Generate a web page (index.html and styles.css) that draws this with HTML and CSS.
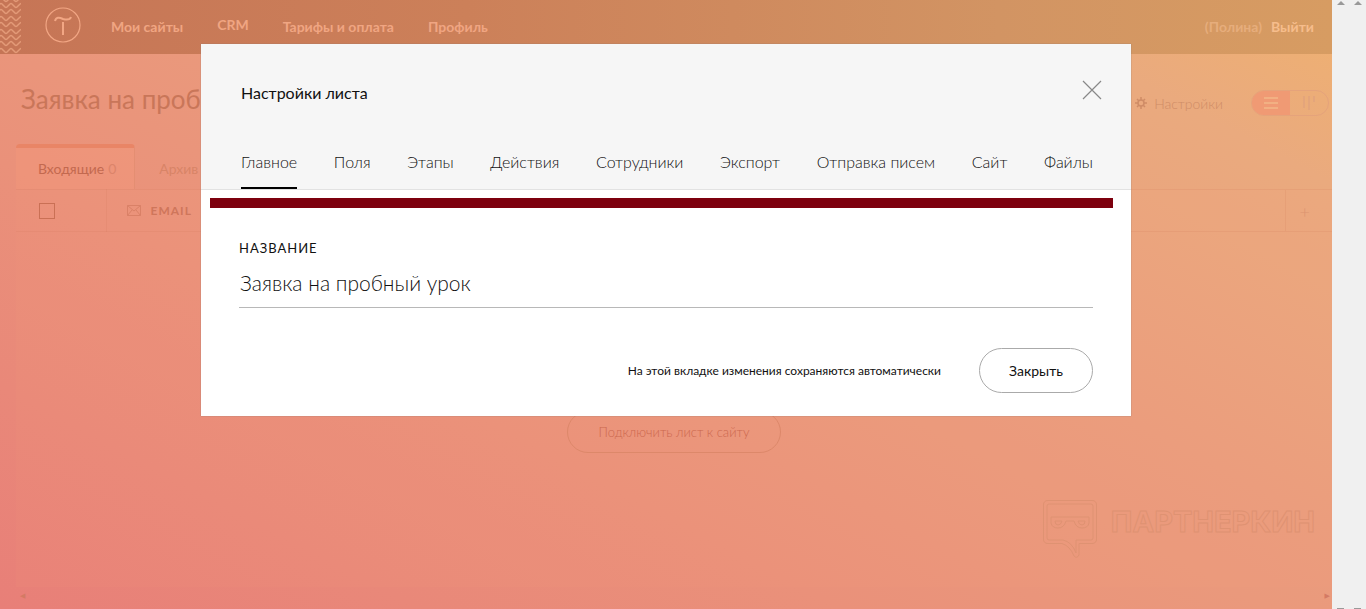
FILE: index.html
```html
<!DOCTYPE html>
<html lang="ru">
<head>
    <meta charset="UTF-8">
    <meta name="viewport" content="width=device-width, initial-scale=1.0">
    <title>Заявка на пробный урок</title>
    <link rel="stylesheet" href="styles.css">
</head>
<body>

<div class="app">
    <header class="header">
        <svg class="waves" width="21" height="54" viewBox="0 0 21 54" fill="none" stroke="#e39a78" stroke-width="1.500">
            <defs>
                <path id="wave" d="M-3 3 L0 0 Q1 -1 2 0 L5 3 Q6 4 7 3 L10 0 Q11 -1 12 0 L15 3 Q16 4 17 3 L20 0 L22 -1"/>
            </defs>
            <use href="#wave" y="-2"/>
            <use href="#wave" y="4"/>
            <use href="#wave" y="10"/>
            <use href="#wave" y="17"/>
            <use href="#wave" y="23"/>
            <use href="#wave" y="30"/>
            <use href="#wave" y="36"/>
            <use href="#wave" y="42"/>
            <use href="#wave" y="49"/>
        </svg>
        <a class="logo" href="#" aria-label="Tilda">
            <svg width="36" height="36" viewBox="0 0 36 36" fill="none" stroke="#f2a684">
                <circle cx="18" cy="18" r="17" stroke-width="1.200"/>
                <path d="M10 14 C11 10 14 10 18 12 C22 13 25 13 26 10" stroke-width="2"/>
                <path d="M18 15 V28" stroke-width="2"/>
            </svg>
        </a>
        <nav class="menu">
            <a href="#">Мои сайты</a>
            <a class="menu-crm" href="#">CRM</a>
            <a href="#">Тарифы и оплата</a>
            <a href="#">Профиль</a>
        </nav>
        <div class="user">
            <span class="user-name">(Полина)</span>
            <a href="#">Выйти</a>
        </div>
    </header>

    <div class="lead-head">
        <h1>Заявка на проб</h1>
        <div class="lead-tools">
            <button class="settings" type="button">
                <svg width="12" height="12" viewBox="0 0 12 12" fill="none" stroke="currentColor">
                    <circle cx="6" cy="6" r="3" stroke-width="1.5"/>
                    <path d="M6 0V3M6 9V12M0 6H3M9 6H12M2 2L4 4M8 8L10 10M10 2L8 4M4 8L2 10" stroke-width="1.5"/>
                </svg>
                Настройки
            </button>
            <div class="view">
                <button class="view-btn view-on" type="button" aria-label="Список">
                    <svg width="14" height="12" viewBox="0 0 14 12" stroke="#f2b083" stroke-width="2"><path d="M0 1H14M0 6H14M0 11H14"/></svg>
                </button>
                <button class="view-btn" type="button" aria-label="Доска">
                    <svg width="12" height="14" viewBox="0 0 12 14" stroke="#e4a57b" stroke-width="2"><path d="M1 0V12M6 0V14M11 0V6"/></svg>
                </button>
            </div>
        </div>
    </div>

    <div class="lead-tabs">
        <a class="lead-tab lead-tab-on" href="#">Входящие <span>0</span></a>
        <a class="lead-tab" href="#">Архив</a>
    </div>

    <main class="board">
        <table class="leads">
            <tr>
                <th class="col-check"><input type="checkbox" aria-label="Выбрать все"></th>
                <th>
                    <div class="col-email">
                        <svg width="14" height="11" viewBox="0 0 14 11" fill="none" stroke="currentColor"><path d="M.5.5H13.5V10.5H.5ZM.5.5L7 6L13.5.5M.5 10.5L5 5M13.5 10.5L9 5"/></svg>
                        EMAIL
                    </div>
                </th>
                <th class="col-add">+</th>
            </tr>
        </table>
        <button class="connect" type="button">Подключить лист к сайту</button>
    </main>
    <div class="hscroll"><span>◀</span><span>▶</span></div>

    <!-- watermark -->
    <div class="brand">
        <svg width="54" height="58" viewBox="0 0 54 58" fill="none" stroke="#df9272">
            <path d="M5 .5H49Q53.500 .5 53.500 5V39Q53.500 43.500 49 43.500H36V55Q34 59 31 56Q27 46 19 43.500H5Q.5 43.500 .5 39V5Q.5 .5 5 .5Z"/>
            <path d="M6 4H48Q50 4 50 6V38Q50 40 48 40H33V53Q29 42 20 40H6Q4 40 4 38V6Q4 4 6 4Z"/>
            <path d="M8 17H46V23Q45 28 39 28Q33 28 31 21H23Q21 28 15 28Q9 28 8 23Z"/>
            <path d="M12 21H19Q18 25 15 25Q12 25 12 21ZM35 21H42Q42 25 39 25Q36 25 35 21Z"/>
        </svg>
        <span>ПАРТНЕРКИН</span>
    </div>

    <div class="overlay">
        <div class="modal" role="dialog" aria-labelledby="modalTitle">
            <div class="modal-head">
                <div class="modal-top">
                    <h2 id="modalTitle">Настройки листа</h2>
                    <button class="modal-x" type="button" aria-label="Закрыть окно">
                        <svg width="20" height="20" viewBox="0 0 20 20" stroke="#888" stroke-width="1.200"><path d="M1 1L19 19M19 1L1 19"/></svg>
                    </button>
                </div>
                <nav class="tabs">
                    <a class="tab tab-on" href="#">Главное</a>
                    <a class="tab" href="#">Поля</a>
                    <a class="tab" href="#">Этапы</a>
                    <a class="tab" href="#">Действия</a>
                    <a class="tab" href="#">Сотрудники</a>
                    <a class="tab" href="#">Экспорт</a>
                    <a class="tab" href="#">Отправка писем</a>
                    <a class="tab" href="#">Сайт</a>
                    <a class="tab" href="#">Файлы</a>
                </nav>
            </div>
            <div class="marker"></div>
            <form class="modal-body">
                <label for="leadName">НАЗВАНИЕ</label>
                <input id="leadName" type="text" value="Заявка на пробный урок">
                <div class="modal-foot">
                    <span>На этой вкладке изменения сохраняются автоматически</span>
                    <button class="close" type="button">Закрыть</button>
                </div>
            </form>
        </div>
    </div>
</div>

<div class="scrollbars">
    <div class="scrollbar"><i class="up"></i><i class="down"></i></div>
    <div class="scrollbar"><i class="up"></i><i class="down"></i></div>
</div>

</body>
</html>
```
FILE: styles.css
```css
* {
    box-sizing: border-box;
}
body {
    margin: 0;
    min-height: 100vh;
    display: flex;
    font-family: Lato, "Open Sans", sans-serif;
    font-size: 14px;
    color: #111;
}
a {
    color: inherit;
    text-decoration: none;
}
button, input {
    font-family: inherit;
    color: inherit;
}
button {
    padding: 0;
    border: 0;
    background: none;
}
h1, h2 {
    margin: 0;
    font-weight: 400;
}

/* page under the popup */
.app {
    position: relative;
    flex: 1;
    display: flex;
    flex-direction: column;
    background: linear-gradient(28deg, #e87f78 0%, #ea917a 34%, #ea9d7d 60%, #eaaa7e 86%, #efb170 100%);
}
.header {
    height: 54px;
    display: flex;
    align-items: center;
    padding: 0 18px 2px 0;
    background: linear-gradient(90deg, #c67556, #cc8059 35%, #d29463 75%, #d79c62);
    color: #f0a582;
    font-weight: 700;
}
.waves {
    align-self: flex-start;
    flex-shrink: 0;
}
.logo {
    height: 36px;
    margin: 0 30px 3px 24px;
}
.menu {
    flex: 1;
    display: flex;
    align-items: center;
    gap: 34px;
}
.menu-crm {
    padding-bottom: 4px;
}
.user {
    display: flex;
    gap: 9px;
    color: #f6bd8c;
}
.user-name {
    color: #e6ad7c;
}
.lead-head {
    height: 90px;
    padding: 0 3px 0 21px;
    display: flex;
    align-items: center;
    justify-content: space-between;
    color: #c97659;
}
h1 {
    font-size: 26px;
}
.lead-tools {
    display: flex;
    align-items: center;
    gap: 28px;
    padding-top: 8px;
}
.settings {
    display: flex;
    align-items: center;
    gap: 7px;
    font-size: 14px;
    font-weight: 300;
    color: #cf8c66;
}
.view {
    display: flex;
    border: 1px solid #e5a37b;
    border-radius: 13px;
    overflow: hidden;
}
.view-btn {
    width: 38px;
    height: 24px;
    display: flex;
    align-items: center;
    justify-content: center;
}
.view-on {
    background: #f09a74;
}
.lead-tabs {
    display: flex;
    padding-left: 16px;
    color: #d88467;
}
.lead-tab {
    height: 45px;
    padding: 4px 24px 0;
    display: flex;
    align-items: center;
    gap: 4px;
}
.lead-tab-on {
    padding: 0 18px 0 22px;
    border-top: 4px solid #e98566;
    border-right: 1px solid #e48e72;
    border-radius: 4px 4px 0 0;
    background: rgba(255, 160, 125, 0.2);
    color: #c3694f;
}
.lead-tab-on span {
    color: #dc846a;
}
.board {
    flex: 1;
    margin-left: 16px;
    display: flex;
    flex-direction: column;
    align-items: center;
    background: rgba(255, 160, 125, 0.08);
}
.leads {
    width: 100%;
    border-collapse: collapse;
    color: #cf765b;
}
.leads th {
    height: 42px;
    padding: 0 20px;
    border: 1px solid rgba(200, 110, 80, 0.13);
    border-left: 0;
    border-right: 0;
    text-align: left;
    font-size: 12px;
    font-weight: 700;
}
.leads .col-check {
    width: 90px;
    padding: 0 23px;
    border-right: 1px solid rgba(200, 110, 80, 0.13);
}
.col-check input {
    display: block;
    width: 16px;
    height: 16px;
    margin: 0;
    appearance: none;
    border: 1px solid #ca7055;
}
.col-email {
    display: flex;
    align-items: center;
    gap: 10px;
    letter-spacing: 1px;
}
.col-email svg {
    opacity: 0.6;
}
.leads .col-add {
    width: 47px;
    padding: 0 14px;
    border-left: 1px solid rgba(200, 110, 80, 0.13);
    font-size: 18px;
    font-weight: 300;
    color: #dc9570;
}
.connect {
    height: 42px;
    margin-top: 179px;
    padding: 0 31px;
    border: 1px solid #dd886a;
    border-radius: 21px;
    font-size: 13px;
    font-weight: 300;
    color: #cb684f;
}
.hscroll {
    display: flex;
    justify-content: space-between;
    height: 22px;
    padding: 3px 2px 0 20px;
    font: 7px/12px "DejaVu Sans", sans-serif;
    color: #d47a64;
}
.brand {
    position: absolute;
    right: 17px;
    bottom: 51px;
    display: flex;
    gap: 14px;
    line-height: 44px;
    font-family: Inter, Roboto, sans-serif;
    font-size: 29px;
    font-weight: 700;
    color: transparent;
    -webkit-text-stroke: 1px #df9272;
}

/* popup */
.overlay {
    position: absolute;
    inset: 0;
    padding: 44px 20px 20px;
    display: flex;
    justify-content: center;
    align-items: flex-start;
}
.modal {
    width: 100%;
    max-width: 930px;
    background: #fff;
    box-shadow: 0 0 1px #8b7770;
}
.modal-head {
    padding: 35px 38px 0 40px;
    background: #f6f6f6;
    border-bottom: 1px solid #e2e2e2;
}
.modal-top {
    display: flex;
    justify-content: space-between;
    align-items: flex-start;
    height: 57px;
}
h2 {
    padding-top: 2px;
    font-size: 16px;
    line-height: 24px;
}
.modal-x {
    height: 20px;
    margin: 1px -9px 0 0;
}
.tabs {
    display: flex;
    justify-content: space-between;
}
.tab {
    height: 53px;
    padding-top: 14px;
    line-height: 24px;
    font-size: 16px;
    font-weight: 300;
}
.tab-on {
    border-bottom: 2px solid #000;
}
.marker {
    height: 10px;
    margin: 8px 18px 0 9px;
    background: #7d000e;
}
.modal-body {
    padding: 30px 38px 23px;
}
.modal-body label {
    display: block;
    font-size: 13px;
    line-height: 20px;
    letter-spacing: 1px;
}
.modal-body input {
    display: block;
    width: 100%;
    height: 50px;
    padding: 0 1px 1px;
    border: 0;
    border-bottom: 1px solid #b8b8b8;
    background: none;
    font-size: 21px;
    font-weight: 300;
    outline: none;
}
.modal-foot {
    display: flex;
    justify-content: flex-end;
    align-items: center;
    gap: 38px;
    margin-top: 40px;
    font-size: 12px;
}
.close {
    width: 114px;
    height: 45px;
    border: 1px solid #aaa;
    border-radius: 23px;
    font-size: 14px;
}

/* window scrollbars */
.scrollbars {
    width: 34px;
    display: flex;
    background: #f0f0f0;
}
.scrollbar {
    flex: 1;
    display: flex;
    flex-direction: column;
    justify-content: space-between;
    align-items: center;
}
.up {
    margin-top: 1px;
    border: 4px solid transparent;
    border-top: 0;
    border-bottom-color: #999;
}
.down {
    width: 7px;
    height: 1px;
    background: #999;
}
```
